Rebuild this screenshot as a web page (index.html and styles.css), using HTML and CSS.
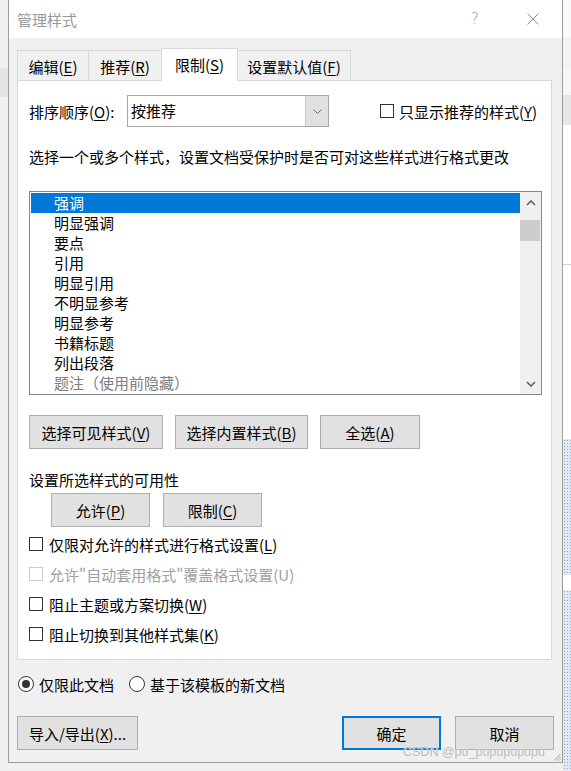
FILE: index.html
```html
<!DOCTYPE html>
<html lang="zh-CN">
<head>
<meta charset="utf-8">
<title>管理样式</title>
<link rel="stylesheet" href="styles.css">
</head>
<body>
<div class="desk">
  <div class="side side-left">
    <div class="lb lb1"></div>
    <div class="lb lb2"></div>
  </div>

  <div class="dialog">
    <div class="titlebar">
      <span class="title">管理样式</span>
      <span class="help">?</span>
      <span class="close">
        <svg width="12" height="12" viewBox="0 0 12 12"><path d="M0.5 0.5 L11.5 11.5 M11.5 0.5 L0.5 11.5" stroke="#8f8f8f" stroke-width="1" fill="none"/></svg>
      </span>
    </div>

    <div class="body">
      <div class="tabs">
        <div class="tab t1">编辑(<u>E</u>)</div>
        <div class="tab t2">推荐(<u>R</u>)</div>
        <div class="tab t3 active">限制(<u>S</u>)</div>
        <div class="tab t4">设置默认值(<u>F</u>)</div>
      </div>

      <div class="panel">
        <div class="sort-row">
          <span class="sort-label">排序顺序(<u>O</u>):</span>
          <div class="combo">
            <span class="combo-text">按推荐</span>
            <span class="combo-btn">
              <svg width="9" height="5" viewBox="0 0 9 5"><path d="M0.5 0.5 L4.5 4.5 L8.5 0.5" stroke="#707070" stroke-width="1" fill="none"/></svg>
            </span>
          </div>
          <label class="check only-rec"><span class="box"></span><span>只显示推荐的样式(<u>Y</u>)</span></label>
        </div>

        <div class="desc">选择一个或多个样式，设置文档受保护时是否可对这些样式进行格式更改</div>

        <div class="listbox">
          <div class="items">
            <div class="item selected">强调</div>
            <div class="item">明显强调</div>
            <div class="item">要点</div>
            <div class="item">引用</div>
            <div class="item">明显引用</div>
            <div class="item">不明显参考</div>
            <div class="item">明显参考</div>
            <div class="item">书籍标题</div>
            <div class="item">列出段落</div>
            <div class="item hidden-style">题注（使用前隐藏）</div>
          </div>
          <div class="scrollbar">
            <div class="sb-btn">
              <svg width="10" height="6" viewBox="0 0 10 6"><path d="M1 5 L5 1 L9 5" stroke="#606060" stroke-width="1.6" fill="none"/></svg>
            </div>
            <div class="sb-thumb"></div>
            <div class="sb-space"></div>
            <div class="sb-btn">
              <svg width="10" height="6" viewBox="0 0 10 6"><path d="M1 1 L5 5 L9 1" stroke="#606060" stroke-width="1.6" fill="none"/></svg>
            </div>
          </div>
        </div>

        <div class="btn-row">
          <button class="btn w134">选择可见样式(<u>V</u>)</button>
          <button class="btn w133">选择内置样式(<u>B</u>)</button>
          <button class="btn w100">全选(<u>A</u>)</button>
        </div>

        <div class="section-label">设置所选样式的可用性</div>

        <div class="btn-row2">
          <button class="btn w99">允许(<u>P</u>)</button>
          <button class="btn w99">限制(<u>C</u>)</button>
        </div>

        <div class="checks">
          <label class="check row"><span class="box"></span><span>仅限对允许的样式进行格式设置(<u>L</u>)</span></label>
          <label class="check row disabled"><span class="box"></span><span>允许"自动套用格式"覆盖格式设置(U)</span></label>
          <label class="check row"><span class="box"></span><span>阻止主题或方案切换(<u>W</u>)</span></label>
          <label class="check row"><span class="box"></span><span>阻止切换到其他样式集(<u>K</u>)</span></label>
        </div>
      </div>

      <div class="scope">
        <label class="radio r1"><span class="circle on"></span><span>仅限此文档</span></label>
        <label class="radio"><span class="circle"></span><span>基于该模板的新文档</span></label>
      </div>

      <div class="footer">
        <button class="btn w121">导入/导出(<u>X</u>)...</button>
        <button class="btn w99 default">确定</button>
        <button class="btn w99 cancel">取消</button>
      </div>
    </div>

    <div class="watermark">CSDN @pu_pupupupupu</div>
    <svg class="grip" width="8" height="8" viewBox="0 0 8 8"><path d="M7.5 1 L1 7.5 M7.5 4 L4 7.5 M7.5 6.5 L6.5 7.5" stroke="#a0a0a0" stroke-width="1" fill="none"/></svg>
  </div>

  <div class="side side-right">
    <div class="rb rb1"></div>
    <div class="rb rb2"></div>
    <div class="rb rb3"></div>
    <div class="rb rb4"></div>
    <div class="rb rb5"></div>
    <div class="rb rb6"></div>
    <div class="rb rb7"></div>
    <div class="rb rb8"></div>
    <div class="rb rb9"></div>
  </div>
</div>
</body>
</html>
```

FILE: styles.css
```css
* { box-sizing: border-box; }

html, body { margin: 0; padding: 0; }

body {
  font-family: "Noto Sans CJK SC", "Microsoft YaHei", sans-serif;
  font-size: 15px;
  color: #000;
  background: #f0f0f0;
}

u { text-decoration: underline; text-underline-offset: 2px; text-decoration-thickness: 1px; }

.desk {
  display: flex;
  width: 571px;
  height: 771px;
  overflow: hidden;
}

/* desktop strips beside the dialog */
.side { width: 8px; flex: none; overflow: hidden; display: flex; flex-direction: column; }
.side-left { background: #f0f0f0; }
.lb1 { height: 68px; }
.lb2 { height: 29px; background: #e3e3e3; }

.side-right { background: #fff; }
.rb { flex: none; }
.rb1 { height: 37px; background: #fafafa; }
.rb2 { height: 32px; background: #f3f3f3; }
.rb3 { height: 26px; background: #f6f6f6; }
.rb4 { height: 30px; background: #e6e6e6; }
.rb5 { height: 140px; background: #fff; border-bottom: 1px solid #d0d0d0; }
.rb6 { height: 174px; background: #fff; }
.rb7 { height: 136px; background: #dfe8f4; background-image: radial-gradient(#9aa8b8 0.6px, transparent 0.8px); background-size: 3px 3px; }
.rb8 { height: 15px; background: #fff; }
.rb9 { flex: 1; background: #dfe8f4; background-image: radial-gradient(#9aa8b8 0.6px, transparent 0.8px); background-size: 3px 3px; }

/* dialog window */
.dialog {
  width: 555px;
  height: 763px;
  flex: none;
  border: 1px solid #9c9c9c;
  border-top: 0;
  background: #f0f0f0;
  display: flex;
  flex-direction: column;
  position: relative;
}

.titlebar {
  height: 38px;
  flex: none;
  background: #fff;
  display: flex;
  align-items: center;
  padding: 0 6px 0 8px;
}
.title { flex: 1; color: #999; font-size: 15px; }
.help { width: 40px; text-align: center; color: #999; font-size: 15px; font-family: "DejaVu Sans", sans-serif; font-weight: 300; }
.close { width: 46px; margin-left: 15px; display: flex; justify-content: center; align-items: center; }

.body {
  flex: 1;
  display: flex;
  flex-direction: column;
  padding: 10px 8px 0 8px;
}

/* tabs */
.tabs {
  display: flex;
  align-items: flex-end;
  height: 33px;
  margin-bottom: -1px;
}
.tab {
  height: 30px;
  margin-bottom: 1px;
  border: 1px solid #d9d9d9;
  border-bottom: 0;
  background: #f0f0f0;
  display: flex;
  align-items: center;
  justify-content: center;
  padding-top: 2px;
  margin-left: -1px;
}
.t1 { width: 72px; margin-left: 0; }
.t2 { width: 74px; }
.t3 { width: 77px; }
.t4 { width: 114px; }
.tab.active {
  height: 33px;
  margin-bottom: 0;
  background: #fff;
  position: relative;
  z-index: 1;
  padding-top: 0;
  padding-bottom: 1px;
}

/* main panel */
.panel {
  width: 535px;
  height: 580px;
  flex: none;
  background: #fff;
  border: 1px solid #d9d9d9;
  padding: 0 0 0 11px;
  display: flex;
  flex-direction: column;
}

.sort-row {
  display: flex;
  align-items: center;
  margin-top: 14px;
  height: 32px;
}
.sort-label { width: 98px; flex: none; }
.combo {
  width: 202px;
  height: 32px;
  border: 1px solid #a5a5a5;
  display: flex;
  background: #fff;
}
.combo-text { flex: 1; line-height: 30px; padding-left: 3px; }
.combo-btn {
  width: 23px;
  background: #e1e1e1;
  border-left: 1px solid #c8c8c8;
  display: flex;
  align-items: center;
  justify-content: center;
}

.check { display: flex; align-items: center; }
.box {
  width: 14px;
  height: 14px;
  border: 1px solid #333;
  background: #fff;
  flex: none;
}
.only-rec { margin-left: 51px; }
.only-rec .box { margin-right: 5px; }

.desc { margin-top: 20px; line-height: 20px; height: 20px; white-space: nowrap; }

/* list box */
.listbox {
  margin-top: 24px;
  width: 513px;
  height: 204px;
  border: 1px solid #828790;
  display: flex;
}
.items { flex: 1; padding: 1px 0 1px 1px; }
.item { height: 20px; line-height: 20px; padding-left: 23px; white-space: nowrap; }
.item.selected { background: #0078d7; color: #fff; }
.item.hidden-style { color: #7d7d7d; }

.scrollbar {
  width: 21px;
  flex: none;
  background: #f0f0f0;
  display: flex;
  flex-direction: column;
}
.sb-btn { height: 21px; display: flex; align-items: center; justify-content: center; }
.sb-thumb { height: 21px; margin: 7px 1px 0 0; background: #cdcdcd; }
.sb-space { flex: 1; }

/* buttons */
.btn {
  font: inherit;
  color: #000;
  height: 34px;
  background: #e1e1e1;
  border: 1px solid #adadad;
  padding: 0;
  margin: 0;
  display: flex;
  align-items: center;
  justify-content: center;
  white-space: nowrap;
}
.w134 { width: 134px; }
.w133 { width: 133px; }
.w100 { width: 100px; }
.w99 { width: 99px; }
.w121 { width: 121px; }

.btn-row { display: flex; gap: 12px; margin-top: 20px; }

.section-label { margin-top: 21px; line-height: 20px; height: 20px; }

.btn-row2 { display: flex; gap: 13px; margin-top: 3px; margin-left: 22px; }

.checks { margin-top: 2px; display: flex; flex-direction: column; }
.check.row { height: 30px; }
.check.row .box { margin-right: 6px; }
.check.disabled { color: #a0a0a0; }
.check.disabled .box { border-color: #cccccc; }

/* scope radios */
.scope {
  display: flex;
  align-items: center;
  height: 20px;
  margin-top: 14px;
}
.radio { display: flex; align-items: center; }
.radio.r1 { width: 111px; }
.circle {
  width: 16px;
  height: 16px;
  border: 1px solid #333;
  border-radius: 50%;
  background: #fff;
  margin: 0 5px 0 1px;
  flex: none;
  display: flex;
  align-items: center;
  justify-content: center;
}
.circle.on::after {
  content: "";
  width: 8px;
  height: 8px;
  border-radius: 50%;
  background: #333;
}

/* footer */
.footer {
  display: flex;
  margin-top: 22px;
}
.btn.default { margin-left: auto; border: 2px solid #0078d7; }
.btn.cancel { margin-left: 14px; }

/* overlays */
.watermark {
  position: absolute;
  left: 394px;
  top: 745px;
  font-family: "Liberation Sans", Arial, sans-serif;
  font-size: 12.5px;
  color: #b9b9b9;
  text-shadow: 0 0 1px #fff;
  white-space: nowrap;
}
.grip { position: absolute; right: 1px; bottom: 1px; }
```
